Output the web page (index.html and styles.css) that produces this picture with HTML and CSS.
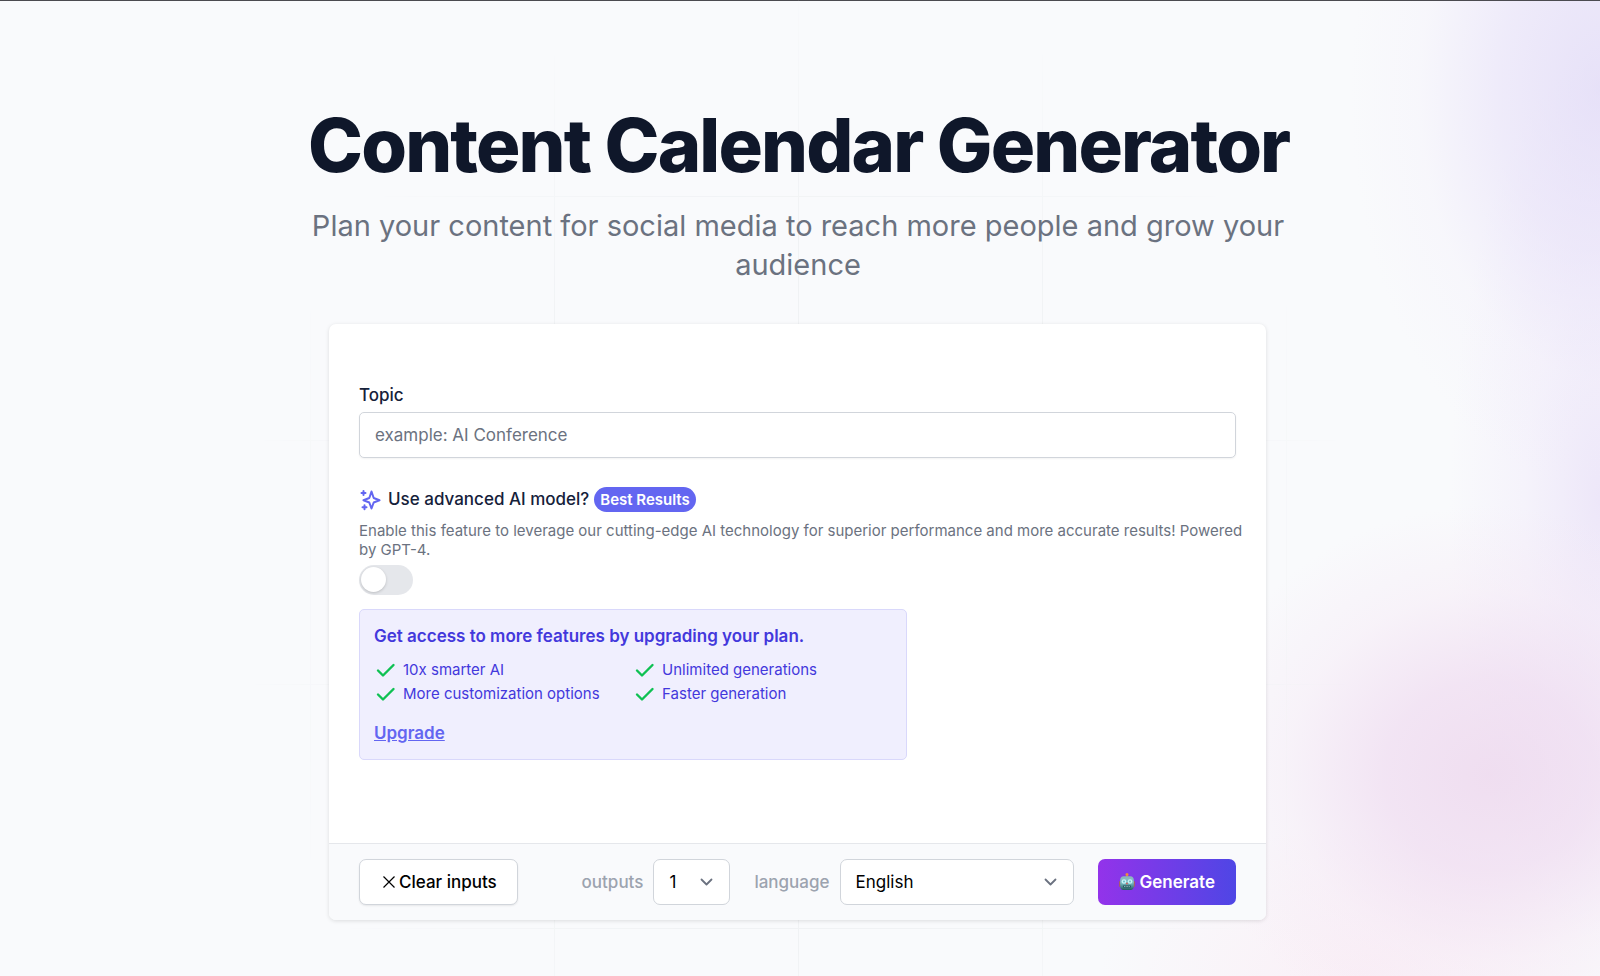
FILE: index.html
```html
<!DOCTYPE html>
<html lang="en">
<head>
<meta charset="utf-8">
<meta name="viewport" content="width=device-width, initial-scale=1">
<title>Content Calendar Generator</title>
<link rel="stylesheet" href="styles.css">
</head>
<body class="page">
<div class="backdrop-grid" aria-hidden="true"></div>
<main class="content">
  <header class="hero">
    <h1 class="hero-title">Content Calendar Generator</h1>
    <p class="hero-text">Plan your content for social media to reach more people and grow your audience</p>
  </header>
  <form class="card">
    <div class="card-body">
      <div class="field">
        <label class="field-label" for="topic">Topic</label>
        <input class="text-input" id="topic" type="text" placeholder="example: AI Conference">
      </div>
      <div class="model">
        <div class="model-heading">
          <svg class="sparkle" viewBox="0 0 24 24" aria-hidden="true"><path d="M12.500 3.500L10.300 10L4.500 12.300L10.300 14.500L12.500 20.500L14.700 14.500L20.500 12.300L14.700 10ZM4.500 3v4M2.500 5h4M5.500 17.300v4M3.500 19.300h4"/></svg>
          <label class="model-label" for="advanced">Use advanced AI model?</label>
          <span class="badge">Best Results</span>
        </div>
        <p class="model-text">Enable this feature to leverage our cutting-edge AI technology for superior performance and more accurate results! Powered by GPT-4.</p>
        <input class="toggle" id="advanced" type="checkbox">
      </div>
      <section class="upgrade">
        <h2 class="upgrade-title">Get access to more features by upgrading your plan.</h2>
        <ul class="features">
          <li class="feature"><svg class="check" viewBox="0 0 24 24" aria-hidden="true"><path d="M4 12.500l5 5L19.500 7"/></svg>10x smarter AI</li>
          <li class="feature"><svg class="check" viewBox="0 0 24 24" aria-hidden="true"><path d="M4 12.500l5 5L19.500 7"/></svg>Unlimited generations</li>
          <li class="feature"><svg class="check" viewBox="0 0 24 24" aria-hidden="true"><path d="M4 12.500l5 5L19.500 7"/></svg>More customization options</li>
          <li class="feature"><svg class="check" viewBox="0 0 24 24" aria-hidden="true"><path d="M4 12.500l5 5L19.500 7"/></svg>Faster generation</li>
        </ul>
        <a class="upgrade-link" href="#upgrade">Upgrade</a>
      </section>
    </div>
    <footer class="card-footer">
      <button class="button button-clear" type="reset"><svg class="cross" viewBox="0 0 14 14" aria-hidden="true"><path d="M1.500 1.500l11 11M12.500 1.500l-11 11"/></svg>Clear inputs</button>
      <div class="option option-outputs">
        <label class="option-label" for="outputs">outputs</label>
        <span class="select-wrap select-small">
          <select class="select" id="outputs"><option>1</option><option>2</option><option>3</option></select>
          <svg class="chevron" viewBox="0 0 14 14" aria-hidden="true"><path d="M1.500 4.500L6.500 9.500l5-5"/></svg>
        </span>
      </div>
      <div class="option option-language">
        <label class="option-label" for="language">language</label>
        <span class="select-wrap select-large">
          <select class="select" id="language"><option>English</option><option>Spanish</option><option>French</option></select>
          <svg class="chevron" viewBox="0 0 14 14" aria-hidden="true"><path d="M1.500 4.500L6.500 9.500l5-5"/></svg>
        </span>
      </div>
      <button class="button button-generate" type="submit">
        <svg class="robot" viewBox="0 0 16 18" aria-hidden="true">
          <defs><linearGradient id="face" x1="0" y1="0" x2="0" y2="1"><stop offset="0" stop-color="#8fb4bb"/><stop offset="0.450" stop-color="#7cc4cc"/><stop offset="1" stop-color="#235a60"/></linearGradient></defs>
          <path d="M7.300 2h1.400v2H7.300z" fill="#c98a6a"/><circle cx="8" cy="1.600" r="1.500" fill="#f08a3c"/>
          <rect x="0" y="8" width="2" height="6" rx="1" fill="#a85b67"/><rect x="14" y="8" width="2" height="6" rx="1" fill="#a85b67"/>
          <path d="M4.500 3.300h7q3 0.200 3.300 3.500V13.500q0 3.300-3.300 3.500h-7q-3.300-0.200-3.300-3.500V6.800q0.300-3.300 3.300-3.500z" fill="url(#face)"/>
          <circle cx="5" cy="8.500" r="2.300" fill="#c9f3f7"/><circle cx="11" cy="8.500" r="2.300" fill="#c9f3f7"/><circle cx="5" cy="8.500" r="0.900" fill="#5fb9c4"/><circle cx="11" cy="8.500" r="0.900" fill="#5fb9c4"/>
          <path d="M8 9l1.200 2.200H6.800z" fill="#d75453"/><path d="M4 12.500h8v2H4z" fill="#24585d"/><path d="M5 13.500h6" stroke="#9fc8c9" stroke-width="0.800" stroke-dasharray="1 0.600"/>
        </svg>Generate</button>
    </footer>
  </form>
</main>
</body>
</html>
```

FILE: styles.css
```css
* { box-sizing: border-box; }

.page {
  margin: 0;
  min-height: 100vh;
  border-top: 1px solid #4b4b50;
  color: #0f172a;
  font-family: Inter, "Liberation Sans", sans-serif;
  background:
    radial-gradient(ellipse 250px 400px at 100% 90px, rgb(221 212 246 / 65%), rgb(228 220 248 / 50%) 40%, rgb(240 235 250 / 22%) 72%, rgb(248 250 252 / 0%)),
    radial-gradient(ellipse 300px 270px at 1490px 775px, rgb(236 212 236 / 74%), rgb(238 216 239 / 64%) 35%, rgb(245 230 244 / 38%) 68%, rgb(248 250 252 / 0%)),
    radial-gradient(ellipse 150px 440px at 100% 500px, rgb(234 226 248 / 80%), rgb(240 234 250 / 45%) 50%, rgb(248 250 252 / 0%)),
    radial-gradient(ellipse 260px 150px at 1360px 100%, rgb(250 228 240 / 50%), rgb(248 250 252 / 0%)),
    #f9fafc;
}

/* Faint square grid that fades towards the edges of the window */
.backdrop-grid {
  position: absolute;
  inset: 0;
  background-image:
    linear-gradient(to right, #f0f2f4 1px, transparent 1px),
    linear-gradient(to bottom, #f0f2f4 1px, transparent 1px);
  background-size: 244px 244px;
  background-position: calc(50% + 120px) 196px;
  mask-image: radial-gradient(ellipse 560px 600px at 50% 60%, #000 60%, transparent);
}

.content {
  position: relative;
  max-width: 1000px;
  margin: 0 auto;
  padding: 100px 12px 54px 8px;
}

.hero { text-align: center; }

.hero-title {
  margin: 0;
  font-size: 74px;
  font-weight: 800;
  line-height: 88px;
  letter-spacing: -0.025em;
  white-space: nowrap;
}

.hero-text {
  margin: 17px 0 0;
  color: #6b7280;
  font-size: 29px;
  line-height: 39px;
}

.card {
  margin: 40px 22px 0 21px;
  overflow: hidden;
  border-radius: 7px;
  background: #fff;
  box-shadow: 0 1px 4px rgb(0 0 0 / 12%);
}

.card-body { padding: 59px 30px 83px; }

.field { display: grid; gap: 4px; }

.field-label,
.model-label {
  color: #15213a;
  font-size: 17px;
  font-weight: 500;
  line-height: 25px;
}

.text-input {
  width: 100%;
  height: 46px;
  padding: 0 15px;
  border: 1px solid #d1d5db;
  border-radius: 5px;
  background: #fff;
  box-shadow: 0 1px 2px rgb(0 0 0 / 5%);
  color: #0f172a;
  font: 400 17px/24px Inter, "Liberation Sans", sans-serif;
}

.text-input::placeholder { color: #6b7280; opacity: 1; }

.model { margin-top: 29px; }

.model-heading { display: flex; align-items: center; gap: 5px; }

.sparkle {
  width: 24px;
  height: 24px;
  fill: none;
  stroke: #6366f1;
  stroke-width: 2;
  stroke-linejoin: round;
  stroke-linecap: round;
}

.badge {
  padding: 0 6px;
  border-radius: 13px;
  background: #6366f1;
  color: #fff;
  font-size: 15px;
  font-weight: 600;
  line-height: 25px;
}

.model-text {
  margin: 9px -12px 6px 0;
  color: #6b7280;
  font-size: 15px;
  line-height: 19px;
}

.toggle {
  appearance: none;
  display: block;
  width: 54px;
  height: 30px;
  margin: 0;
  padding: 2px;
  border-radius: 15px;
  background: #e5e7eb;
}

.toggle::before {
  content: "";
  display: block;
  width: 25px;
  height: 25px;
  border-radius: 50%;
  background: #fff;
  box-shadow: 0 1px 3px rgb(0 0 0 / 18%);
}

.toggle:checked { background: #6366f1; }
.toggle:checked::before { margin-left: auto; }

.upgrade {
  width: 62.5%;
  margin-top: 14px;
  padding: 14px 14px 12px;
  border: 1px solid #d9d8fb;
  border-radius: 5px;
  background: #f0effe;
  color: #4338dc;
}

.upgrade-title {
  margin: 0;
  font-size: 17px;
  font-weight: 600;
  line-height: 25px;
}

.features {
  display: grid;
  grid-template-columns: 1fr 1fr;
  margin: 9px 0 14px;
  padding: 0;
  list-style: none;
  font-size: 15px;
  line-height: 24px;
}

.feature { display: flex; align-items: center; gap: 5px; }

.check {
  width: 24px;
  height: 24px;
  fill: none;
  stroke: #0fc153;
  stroke-width: 2.4;
  stroke-linecap: round;
  stroke-linejoin: round;
}

.upgrade-link {
  color: #6366f1;
  font-size: 17px;
  font-weight: 600;
  line-height: 27px;
}

.card-footer {
  display: flex;
  align-items: center;
  padding: 15px 30px;
  border-top: 1px solid #e5e7eb;
  background: #f9fafc;
}

.button {
  display: flex;
  align-items: center;
  justify-content: center;
  height: 46px;
  border-radius: 7px;
  font: 500 17px/24px Inter, "Liberation Sans", sans-serif;
}

.button-clear {
  gap: 3px;
  padding: 0 20px 0 22px;
  border: 1px solid #d1d5db;
  background: #fff;
  box-shadow: 0 1px 2px rgb(0 0 0 / 8%);
  color: #000;
}

.cross { width: 14px; height: 14px; stroke: currentColor; stroke-width: 1.2; }

.option { display: flex; align-items: center; gap: 10px; }
.option-outputs { margin-left: auto; }
.option-language { margin: 0 24px; }

.option-label { color: #9ca3af; font-size: 17px; font-weight: 500; }

.select-wrap { position: relative; }
.select-small { width: 77px; }
.select-large { width: 234px; }

.select {
  appearance: none;
  display: block;
  width: 100%;
  height: 46px;
  padding: 0 15px;
  border: 1px solid #d1d5db;
  border-radius: 7px;
  background: #fff;
  color: #000;
  font: 400 17px/24px Inter, "Liberation Sans", sans-serif;
}

.chevron {
  position: absolute;
  top: 16px;
  right: 16px;
  width: 14px;
  height: 14px;
  fill: none;
  stroke: #6b7280;
  stroke-width: 1.8;
  stroke-linecap: round;
  stroke-linejoin: round;
  pointer-events: none;
}

.button-generate {
  gap: 5px;
  padding: 0 21px;
  border: 0;
  background: linear-gradient(to right, #9333ea, #4f46e5);
  color: #fff;
  font-weight: 600;
}

.robot { width: 16px; height: 18px; }
```
